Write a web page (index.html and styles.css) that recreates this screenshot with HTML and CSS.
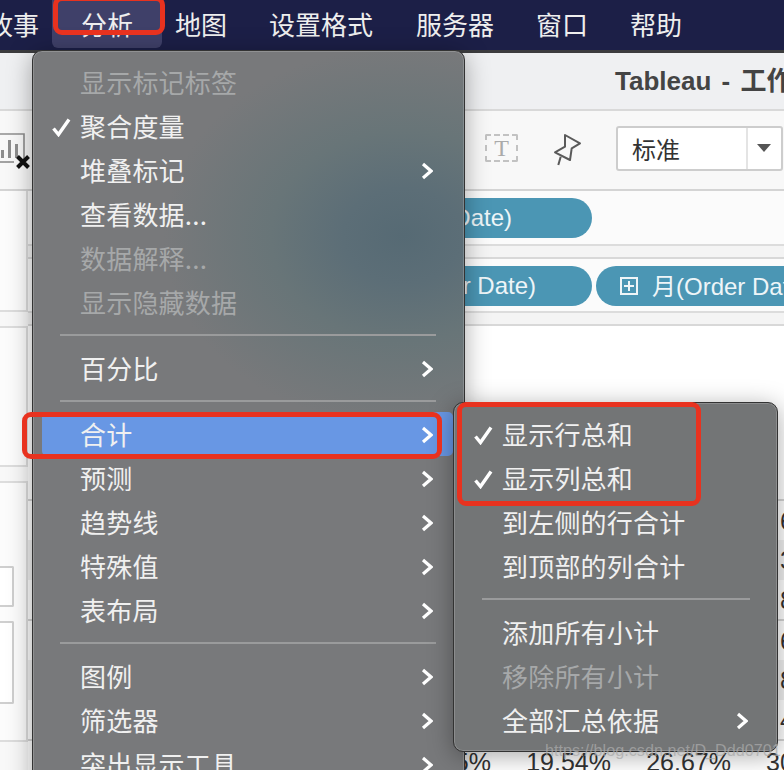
FILE: index.html
```html
<!DOCTYPE html>
<html lang="zh-CN">
<head>
<meta charset="utf-8">
<title>Tableau - 工作表</title>
<link rel="stylesheet" href="styles.css">
</head>
<body>
<div class="screen">
  <nav class="menubar">
    <span class="nav-item">故事</span>
    <span class="nav-item active">分析</span>
    <span class="nav-item">地图</span>
    <span class="nav-item wide">设置格式</span>
    <span class="nav-item">服务器</span>
    <span class="nav-item">窗口</span>
    <span class="nav-item">帮助</span>
  </nav>

  <div class="window">
    <header class="titlebar"><span class="title">Tableau - 工作表</span></header>
    <div class="toolbar">
      <svg class="chart-icon" width="32" height="38" viewBox="0 0 32 38" aria-hidden="true">
        <path d="M0 2H24V28" fill="none" stroke="#8d8d8d" stroke-width="1.6"/>
        <path d="M0 30H14" fill="none" stroke="#8d8d8d" stroke-width="1.6"/>
        <path d="M1 18h3v8H1zM8 8h3v18H8zM15 12h3v14h-3z" fill="#8d8d8d"/>
        <path d="M17.5 24.5l11 11M28.5 24.5l-11 11" stroke="#111" stroke-width="4" fill="none"/>
      </svg>
      <div class="tools">
        <span class="text-tool">T</span>
        <svg class="pin" width="30" height="36" viewBox="0 0 30 36" aria-hidden="true">
          <path d="M12 3L27 11.3 18.7 16.3 17 28 2 20.3 12 14.7Z" fill="none" stroke="#5a5a5a" stroke-width="2" stroke-linejoin="round"/>
          <path d="M7.7 24.7L5.3 33" fill="none" stroke="#5a5a5a" stroke-width="2"/>
        </svg>
        <div class="select"><span class="select-label">标准</span><span class="select-arrow"></span></div>
      </div>
    </div>

    <div class="workspace">
      <aside class="side">
        <div class="card card-a"></div>
        <div class="card card-b"></div>
        <div class="card card-c">
          <div class="mini mini-select"></div>
          <div class="mini mini-box"></div>
        </div>
      </aside>
      <main class="main">
        <div class="shelf shelf-one"><span class="pill pill-cols">年(Order Date)</span></div>
        <div class="shelf-gap"></div>
        <div class="shelf shelf-two">
          <span class="pill pill-rows">季度(Order Date)</span>
          <span class="pill pill-month"><span class="plus-box"></span>月(Order Date)</span>
        </div>
        <div class="shelf-gap"></div>
        <div class="table">
          <div class="table-head"></div>
          <div class="row-group">
            <div class="row">6</div>
            <div class="row shade">3</div>
            <div class="row">8</div>
          </div>
          <div class="row-group">
            <div class="row">6</div>
            <div class="row shade">8</div>
            <div class="row">4</div>
          </div>
          <div class="totals">
            <span class="cell">23.65%</span>
            <span class="cell">19.54%</span>
            <span class="cell">26.67%</span>
            <span class="cell open">30</span>
          </div>
        </div>
      </main>
    </div>
  </div>

  <ul class="menu menu-main">
    <li class="item off"><span class="check"></span><span class="label">显示标记标签</span></li>
    <li class="item"><span class="check"><svg width="19" height="19" viewBox="0 0 19 19"><path d="M1.5 10.5l5 6L17 1.5" fill="none" stroke="#fff" stroke-width="3.4"/></svg></span><span class="label">聚合度量</span></li>
    <li class="item"><span class="check"></span><span class="label">堆叠标记</span><svg class="chev" width="12" height="18" viewBox="0 0 12 18"><path d="M2 2l8 7-8 7" fill="none" stroke="#fff" stroke-width="3.2"/></svg></li>
    <li class="item"><span class="check"></span><span class="label">查看数据...</span></li>
    <li class="item off"><span class="check"></span><span class="label">数据解释...</span></li>
    <li class="item off"><span class="check"></span><span class="label">显示隐藏数据</span></li>
    <li class="sep"></li>
    <li class="item"><span class="check"></span><span class="label">百分比</span><svg class="chev" width="12" height="18" viewBox="0 0 12 18"><path d="M2 2l8 7-8 7" fill="none" stroke="#fff" stroke-width="3.2"/></svg></li>
    <li class="sep"></li>
    <li class="item current"><span class="check"></span><span class="label">合计</span><svg class="chev" width="12" height="18" viewBox="0 0 12 18"><path d="M2 2l8 7-8 7" fill="none" stroke="#fff" stroke-width="3.2"/></svg></li>
    <li class="item"><span class="check"></span><span class="label">预测</span><svg class="chev" width="12" height="18" viewBox="0 0 12 18"><path d="M2 2l8 7-8 7" fill="none" stroke="#fff" stroke-width="3.2"/></svg></li>
    <li class="item"><span class="check"></span><span class="label">趋势线</span><svg class="chev" width="12" height="18" viewBox="0 0 12 18"><path d="M2 2l8 7-8 7" fill="none" stroke="#fff" stroke-width="3.2"/></svg></li>
    <li class="item"><span class="check"></span><span class="label">特殊值</span><svg class="chev" width="12" height="18" viewBox="0 0 12 18"><path d="M2 2l8 7-8 7" fill="none" stroke="#fff" stroke-width="3.2"/></svg></li>
    <li class="item"><span class="check"></span><span class="label">表布局</span><svg class="chev" width="12" height="18" viewBox="0 0 12 18"><path d="M2 2l8 7-8 7" fill="none" stroke="#fff" stroke-width="3.2"/></svg></li>
    <li class="sep"></li>
    <li class="item"><span class="check"></span><span class="label">图例</span><svg class="chev" width="12" height="18" viewBox="0 0 12 18"><path d="M2 2l8 7-8 7" fill="none" stroke="#fff" stroke-width="3.2"/></svg></li>
    <li class="item"><span class="check"></span><span class="label">筛选器</span><svg class="chev" width="12" height="18" viewBox="0 0 12 18"><path d="M2 2l8 7-8 7" fill="none" stroke="#fff" stroke-width="3.2"/></svg></li>
    <li class="item"><span class="check"></span><span class="label">突出显示工具</span><svg class="chev" width="12" height="18" viewBox="0 0 12 18"><path d="M2 2l8 7-8 7" fill="none" stroke="#fff" stroke-width="3.2"/></svg></li>
  </ul>

  <ul class="menu menu-sub">
    <li class="item"><span class="check"><svg width="19" height="19" viewBox="0 0 19 19"><path d="M1.5 10.5l5 6L17 1.5" fill="none" stroke="#fff" stroke-width="3.4"/></svg></span><span class="label">显示行总和</span></li>
    <li class="item"><span class="check"><svg width="19" height="19" viewBox="0 0 19 19"><path d="M1.5 10.5l5 6L17 1.5" fill="none" stroke="#fff" stroke-width="3.4"/></svg></span><span class="label">显示列总和</span></li>
    <li class="item"><span class="check"></span><span class="label">到左侧的行合计</span></li>
    <li class="item"><span class="check"></span><span class="label">到顶部的列合计</span></li>
    <li class="sep"></li>
    <li class="item"><span class="check"></span><span class="label">添加所有小计</span></li>
    <li class="item off"><span class="check"></span><span class="label">移除所有小计</span></li>
    <li class="item"><span class="check"></span><span class="label">全部汇总依据</span><svg class="chev" width="12" height="18" viewBox="0 0 12 18"><path d="M2 2l8 7-8 7" fill="none" stroke="#fff" stroke-width="3.2"/></svg></li>
  </ul>

  <div class="mark mark-nav"></div>
  <div class="mark mark-item"></div>
  <div class="mark mark-sub"></div>
  <div class="watermark">https://blog.csdn.net/D_Ddd0701</div>
</div>
</body>
</html>
```
FILE: styles.css
```css
* { box-sizing: border-box; }
html, body { margin: 0; padding: 0; }
body { font-family: "Noto Sans CJK SC", "Liberation Sans", sans-serif; background: #fff; }
.screen { position: relative; width: 784px; height: 770px; overflow: hidden; background: #fff; }

.menubar { display: flex; gap: 42px; height: 50px; margin-left: -13px; align-items: flex-start; background: #1c1f47; color: #eeeeee; font-size: 26px; white-space: nowrap; }
.nav-item { display: block; flex: none; height: 48px; line-height: 47px; }
.nav-item.active { margin: 0 -29px; padding: 0 29px; background: #3f4069; border-radius: 0 0 6px 6px; }
.nav-item.wide { margin-right: 1px; }

.window { display: flex; flex-direction: column; height: 720px; border-top: 3px solid #3c3c3e; background: #f7f7f7; }
.titlebar { flex: none; height: 58px; padding-left: 615px; background: #eff0f2; border-bottom: 2px solid #d9d9d9; white-space: nowrap; overflow: hidden; }
.title { font-family: "Liberation Sans", "Noto Sans CJK SC", sans-serif; font-weight: 700; font-size: 26px; word-spacing: 3px; line-height: 56px; color: #444; }

.toolbar { flex: none; display: flex; align-items: center; height: 80px; background: #f8f8f8; border-bottom: 2px solid #d4d4d4; }
.chart-icon { flex: none; margin-top: 1px; }
.tools { display: flex; align-items: center; margin-left: auto; margin-bottom: 4px; }
.text-tool { display: flex; width: 33px; height: 28px; align-items: center; justify-content: center; border: 2px dashed #c2c2c2; border-radius: 2px; font-family: "Liberation Serif", serif; font-size: 24px; color: #aaa; }
.pin { flex: none; margin-left: 35px; margin-right: 33px; margin-top: 4px; }
.select { display: flex; align-items: center; width: 167px; height: 45px; margin-right: 1px; border: 2px solid #cdcdcd; border-radius: 3px; background: #fff; }
.select-label { flex: none; width: 130px; padding-left: 14px; font-size: 24px; color: #333; line-height: 41px; border-right: 2px solid #e4e4e4; }
.select-arrow { flex: none; margin-left: 9px; border-left: 7px solid transparent; border-right: 7px solid transparent; border-top: 8px solid #555; }

.workspace { flex: 1; display: flex; min-height: 0; }
.side { flex: none; display: flex; flex-direction: column; gap: 14px; width: 28px; background: #f8f8f8; }
.card { border: 2px solid #dddddd; border-left: 0; background: #fcfcfc; }
.card-a { height: 121px; border-top: 0; }
.card-b { height: 141px; }
.card-c { display: flex; flex-direction: column; gap: 14px; height: 261px; padding-top: 83px; }
.mini { width: 14px; border: 2px solid #cfcfcf; border-left: 0; border-radius: 0 2px 2px 0; background: #fff; }
.mini-select { height: 41px; }
.mini-box { height: 83px; }

.main { flex: 1; display: flex; flex-direction: column; min-width: 0; background: #fff; }
.shelf { flex: none; display: flex; gap: 4px; padding-top: 7px; background: #fbfbfb; border-bottom: 2px solid #dcdcdc; white-space: nowrap; overflow: hidden; }
.shelf-one { height: 55px; }
.shelf-two { height: 54px; }
.shelf-gap { flex: none; height: 13px; background: #f4f4f4; border-bottom: 2px solid #d8d8d8; }
.pill { display: block; flex: none; height: 40px; line-height: 39px; border-radius: 20px; background: #4b96b4; color: #eef5f8; font-family: "Liberation Sans", "Noto Sans CJK SC", sans-serif; font-size: 24px; }
.pill-cols, .pill-rows { width: 264px; margin-left: 300px; text-align: right; }
.pill-cols { padding-right: 80px; }
.pill-rows { padding-right: 56px; }
.pill-month { padding-left: 24px; padding-right: 40px; display: flex; align-items: center; gap: 14px; }
.plus-box { flex: none; position: relative; width: 18px; height: 18px; border: 2px solid #eef5f8; }
.plus-box::before, .plus-box::after { content: ""; position: absolute; background: #eef5f8; }
.plus-box::before { left: 2px; right: 2px; top: 6px; height: 2px; }
.plus-box::after { top: 2px; bottom: 2px; left: 6px; width: 2px; }

.table { flex: 1; display: flex; flex-direction: column; min-height: 0; font-family: "Liberation Sans", sans-serif; font-size: 25px; color: #333; overflow: hidden; }
.table-head { flex: none; height: 175px; border-bottom: 2px solid #d4d4d4; }
.row-group { flex: none; border-bottom: 2px solid #d4d4d4; height: 120px; }
.row { height: 39.3px; line-height: 40px; padding-left: 752px; white-space: nowrap; background: #fff; }
.row.shade { background: #f1f1f1; }
.totals { flex: none; display: flex; gap: 35px; padding-left: 378px; padding-top: 1px; line-height: 40px; white-space: nowrap; }
.cell { flex: none; width: 85px; text-align: right; }
.cell.open { text-align: left; }

.menu { position: absolute; margin: 0; list-style: none; color: #f0f0f0; font-size: 26px; border: 1px solid #333; box-shadow: inset 0 0 0 1px rgba(255,255,255,.18), 0 4px 24px rgba(0,0,0,.34); }
.menu-main { left: 32px; top: 50px; width: 433px; height: 760px; padding: 9px 11px 0 9px; border-radius: 10px; background: radial-gradient(ellipse 240px 190px at 370px 185px, #566a74 0%, #5c6e77 25%, #687578 55%, #78797b 100%), #78797b; }
.menu-sub { left: 453px; top: 402px; width: 325px; height: 350px; padding: 9px 0 0 20px; border-radius: 10px; background: #737576; }
.item { display: flex; align-items: center; height: 44px; }
.check { flex: none; display: flex; width: 29px; height: 19px; margin-top: 2px; }
.menu-main .item { padding-left: 10px; padding-right: 20px; }
.menu-sub .item { padding-right: 29px; }
.label { flex: 1; margin-left: -1px; letter-spacing: .2px; line-height: 44px; white-space: nowrap; }
.chev { flex: none; margin-top: 2px; }
.off { color: #a6a8a9; }
.current { background: #6897e4; border-radius: 5px; }
.sep { height: 22px; display: flex; align-items: center; margin-left: 18px; margin-right: 17px; }
.sep::before { content: ""; flex: 1; height: 2px; background: #9a9b9c; }
.menu-sub .sep { margin-left: 8px; margin-right: 27px; }

.mark { position: absolute; border: 5px solid #e8321f; border-radius: 9px; }
.mark-nav { left: 53px; top: -4px; width: 112px; height: 39px; }
.mark-item { left: 22px; top: 412px; width: 420px; height: 47px; }
.mark-sub { left: 457px; top: 402px; width: 244px; height: 104px; }

.watermark { position: absolute; left: 545px; top: 738px; font-family: "Liberation Sans", sans-serif; font-size: 16.2px; line-height: 24px; color: rgba(170,170,170,.75); white-space: nowrap; }
```
